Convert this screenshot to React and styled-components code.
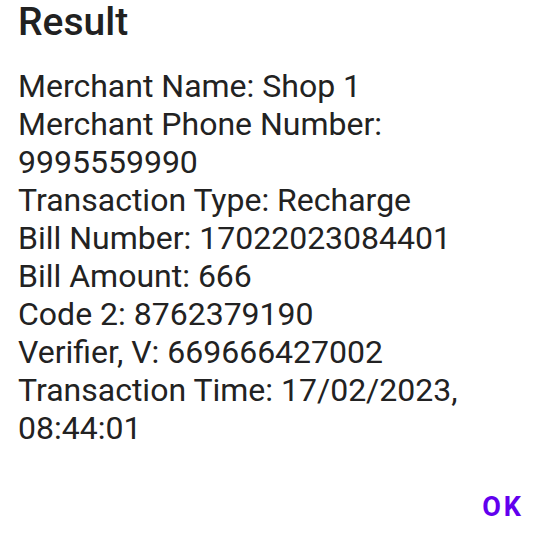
import React from "react";
import styled, { createGlobalStyle } from "styled-components";

const Global = createGlobalStyle`
  html, body {
    margin: 0;
    background: #ffffff;
  }
  body {
    font-family: Roboto, "Noto Sans", sans-serif;
  }
`;

const Dialog = styled.div`
  width: 547px;
  height: 535px;
  box-sizing: border-box;
  display: flex;
  flex-direction: column;
  background: #ffffff;
  padding: 0 0 0 18px;
`;

const Title = styled.h1`
  margin: 0;
  padding-top: 2px;
  font-size: 39px;
  line-height: 40px;
  font-weight: 500;
  color: #212121;
`;

const Body = styled.div`
  margin-top: 25px;
  padding-right: 20px;
  font-size: 32px;
  line-height: 38px;
  color: #222222;
`;

const Line = styled.div``;

const Actions = styled.div`
  margin-top: auto;
  display: flex;
  justify-content: flex-end;
  padding: 0 23px 8px 0;
`;

const OkButton = styled.button`
  border: none;
  background: none;
  padding: 0;
  font-family: Roboto, "Noto Sans", sans-serif;
  font-size: 27px;
  font-weight: 700;
  letter-spacing: 3px;
  color: #6200ee;
  line-height: 40px;
  cursor: pointer;
`;

const rows = [
  "Merchant Name: Shop 1",
  "Merchant Phone Number: 9995559990",
  "Transaction Type: Recharge",
  "Bill Number: 17022023084401",
  "Bill Amount: 666",
  "Code 2: 8762379190",
  "Verifier, V: 669666427002",
  "Transaction Time: 17/02/2023, 08:44:01",
];

export default function App() {
  return (
    <>
      <Global />
      <Dialog>
        <Title>Result</Title>
        <Body>
          {rows.map((r) => (
            <Line key={r}>{r}</Line>
          ))}
        </Body>
        <Actions>
          <OkButton>OK</OkButton>
        </Actions>
      </Dialog>
    </>
  );
}
